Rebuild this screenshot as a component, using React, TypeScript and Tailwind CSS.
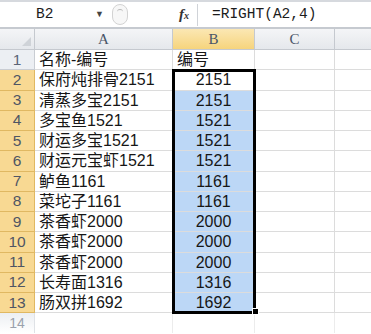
const rows: [string, string][] = [
  ["名称-编号", "编号"],
  ["保府炖排骨2151", "2151"],
  ["清蒸多宝2151", "2151"],
  ["多宝鱼1521", "1521"],
  ["财运多宝1521", "1521"],
  ["财运元宝虾1521", "1521"],
  ["鲈鱼1161", "1161"],
  ["菜坨子1161", "1161"],
  ["茶香虾2000", "2000"],
  ["茶香虾2000", "2000"],
  ["茶香虾2000", "2000"],
  ["长寿面1316", "1316"],
  ["肠双拼1692", "1692"],
];

const cellFont = { fontFamily: "'Liberation Sans', 'Noto Sans CJK SC', sans-serif" };

export default function App() {
  return (
    <div className="relative w-[371px] h-[334px] overflow-hidden bg-white" style={cellFont}>
      {/* Formula bar */}
      <div className="h-[29px] flex flex-col bg-white">
        <div className="h-[2px] bg-[#d6d9de]" />
        <div className="flex-1 flex items-center text-[#1c1c1c]">
          <div className="w-[95px] pl-[36px] text-[14.5px]" style={{ fontFamily: "'Liberation Mono', monospace" }}>
            B2
          </div>
          <div className="w-[14px] text-[9px] text-[#444]">▼</div>
          <div className="ml-[3px] w-[16px] h-[21px] rounded-full border border-[#d3d3d3] bg-[#f7f7f7] flex items-start justify-center pt-[4px]">
            <div className="w-[6px] h-[3px] rounded-t-full border-t border-[#b9b9b9]" />
          </div>
          <div className="ml-[51px] w-[18px] text-[15px] italic font-bold text-[#333]" style={{ fontFamily: "'Liberation Serif', serif" }}>
            f<span className="text-[10px]">x</span>
          </div>
          <div className="w-px h-[22px] bg-[#d0d3d8]" />
          <div className="pl-[14px] text-[14.5px]" style={{ fontFamily: "'Liberation Mono', monospace" }}>
            =RIGHT(A2,4)
          </div>
        </div>
        <div className="h-[2px] bg-[#c6cad0]" />
      </div>

      {/* Column headers */}
      <div className="flex h-[21px] text-[15px] text-[#4a5568] border-b border-[#c5c9cf]" style={{ fontFamily: "'Liberation Serif', serif" }}>
        <div className="relative w-[35px] border-r border-[#c5c9cf] bg-gradient-to-b from-[#f4f5f7] to-[#e5e8ec]">
          <div className="absolute right-[3px] bottom-[3px] w-0 h-0 border-l-[9px] border-l-transparent border-b-[9px] border-b-[#cfd3d8]" />
        </div>
        <div className="w-[138px] flex items-center justify-center border-r border-[#c5c9cf] bg-gradient-to-b from-[#f4f5f7] to-[#e5e8ec]">A</div>
        <div className="w-[82px] flex items-center justify-center border-r border-[#c5c9cf] bg-gradient-to-b from-[#fbe7b3] to-[#f6d47c]">B</div>
        <div className="w-[80px] flex items-center justify-center border-r border-[#c5c9cf] bg-gradient-to-b from-[#f4f5f7] to-[#e5e8ec]">C</div>
        <div className="flex-1 bg-gradient-to-b from-[#f4f5f7] to-[#e5e8ec]" />
      </div>

      {/* Grid rows */}
      {rows.map(([a, b], i) => {
        const n = i + 1;
        const selected = n >= 2;
        return (
          <div key={n} className="flex h-[20.25px] text-[16px] leading-[20px] text-[#161616]">
            <div
              className={
                "w-[35px] flex items-center justify-center text-[15.5px] border-r border-b " +
                (selected
                  ? "bg-[#f8d993] text-[#4f5564] border-[#e0b862]"
                  : "bg-[#eceff3] text-[#5b6577] border-[#c9cdd3]")
              }
            >
              {n}
            </div>
            <div className="w-[138px] pl-[4px] border-r border-b border-[#dcdcdc] whitespace-nowrap overflow-visible">{a}</div>
            <div
              className={
                "w-[82px] border-r border-b border-[#dcdcdc] " +
                (n === 1 ? "pl-[4px]" : "text-center") +
                (n >= 3 ? " bg-[#bcd7f6]" : "")
              }
            >
              {b}
            </div>
            <div className="w-[80px] border-r border-b border-[#dcdcdc]" />
            <div className="flex-1 border-b border-[#dcdcdc]" />
          </div>
        );
      })}

      {/* Row 14, fading out */}
      <div className="flex h-[20px]">
        <div className="w-[35px] flex justify-center items-start pt-[3px] text-[14px] leading-[14px] text-[#9aa1ad] bg-gradient-to-b from-[#eceff3] to-white border-r border-[#dfe2e6]">14</div>
        <div className="w-[138px] border-r border-[#ececec]" />
        <div className="w-[82px] border-r border-[#ececec]" />
        <div className="w-[80px] border-r border-[#ececec]" />
      </div>

      {/* Selection border */}
      <div className="absolute left-[172px] top-[69px] w-[84px] h-[245px] border-[3px] border-black" />
      <div className="absolute left-[252px] top-[308px] w-[7px] h-[7px] bg-black border border-white" />
    </div>
  );
}
